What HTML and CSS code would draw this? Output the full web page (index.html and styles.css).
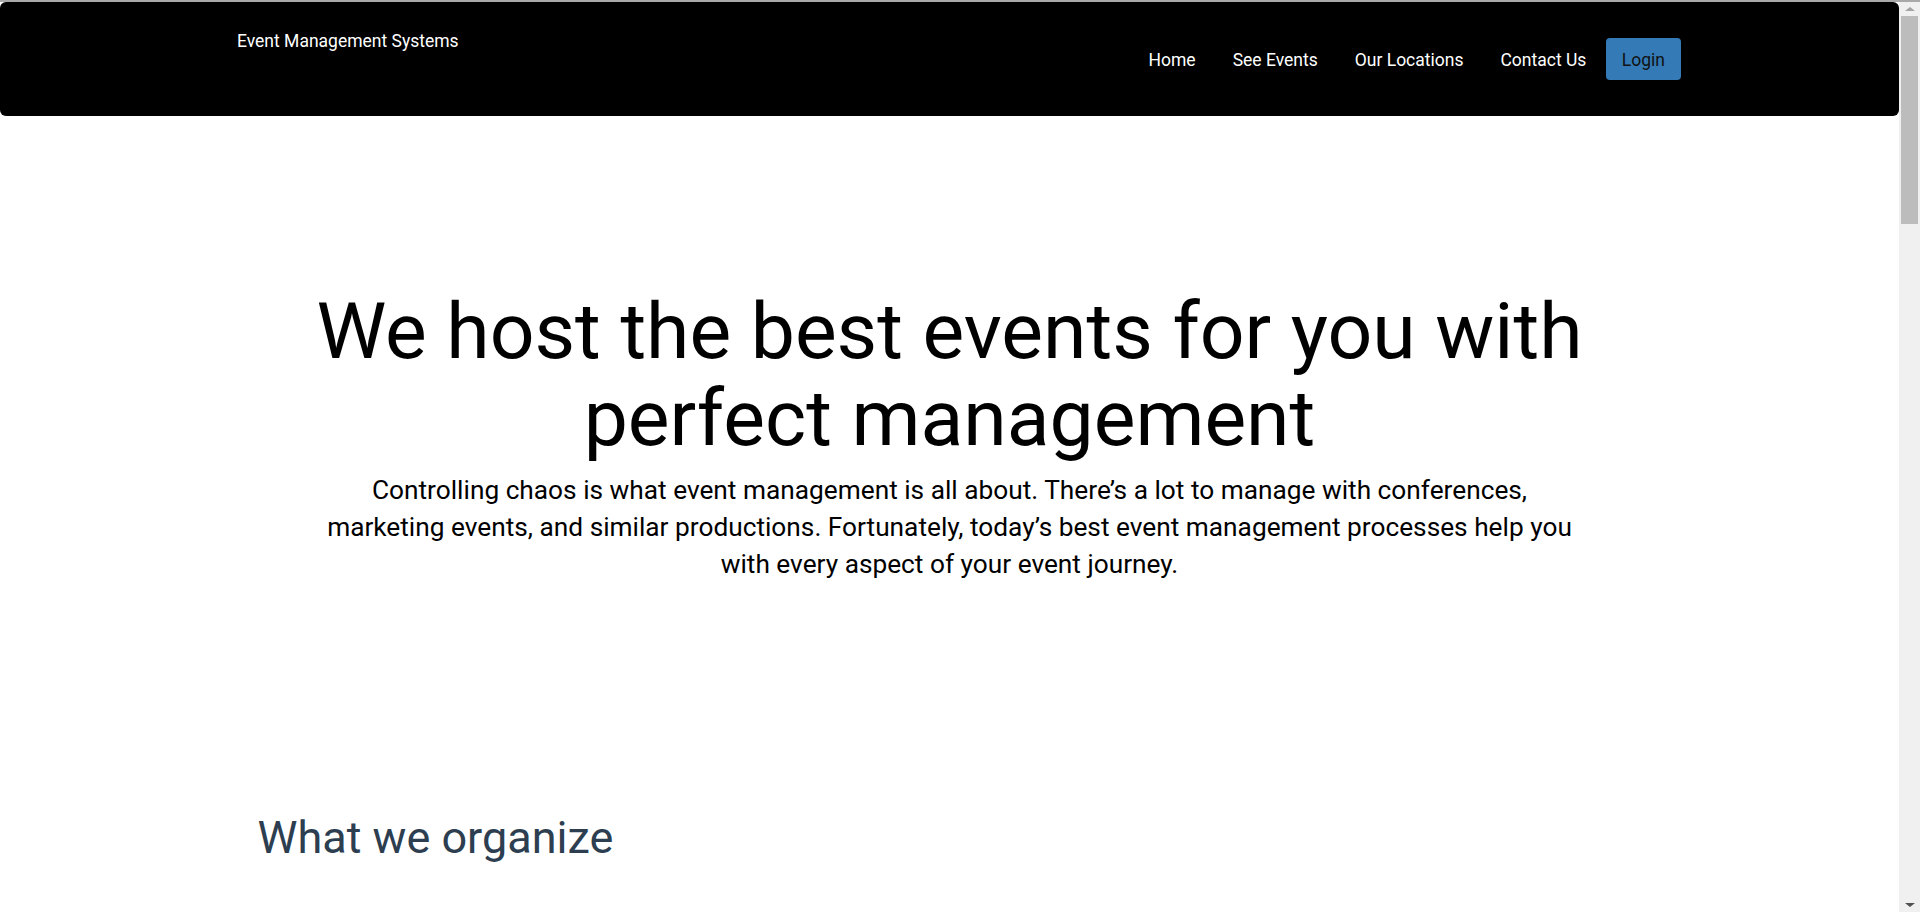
FILE: index.html
```html
<!DOCTYPE html>
<html lang="en">
<head>
<meta charset="utf-8">
<title>Event Management Systems</title>
<link rel="stylesheet" href="styles.css">
</head>
<body>
<header class="navbar">
  <a class="brand" href="#">Event Management Systems</a>
  <nav class="menu">
    <a class="menu-link" href="#">Home</a>
    <a class="menu-link" href="#">See Events</a>
    <a class="menu-link" href="#">Our Locations</a>
    <a class="menu-link" href="#">Contact Us</a>
    <a class="login-btn" href="#">Login</a>
  </nav>
</header>
<main>
  <section class="hero">
    <h1 class="hero-title">We host the best events for you with perfect management</h1>
    <p class="hero-text">Controlling chaos is what event management is all about. There’s a lot to manage with conferences, marketing events, and similar productions. Fortunately, today’s best event management processes help you with every aspect of your event journey.</p>
  </section>
  <section class="organize">
    <h2 class="section-title">What we organize</h2>
    <div class="organize-body"></div>
  </section>
</main>
<div class="scroll-rail" aria-hidden="true">
  <span class="scroll-arrow scroll-arrow-up"></span>
  <span class="scroll-thumb"></span>
  <span class="scroll-arrow scroll-arrow-down"></span>
</div>
</body>
</html>
```

FILE: styles.css
```css
html {
  margin: 0;
  padding: 0;
  background: #f0f0f0;
  border-top: 2px solid #a9a9a9;
}
body {
  margin: 0 21px 0 0;
  padding: 0;
  font-family: Roboto, "Liberation Sans", sans-serif;
  color: #000;
  background: #fff;
}
a { text-decoration: none; }

.navbar {
  box-sizing: border-box;
  height: 114px;
  background: #000;
  border-radius: 6px;
  display: flex;
  justify-content: space-between;
  align-items: flex-start;
  padding: 28.5px 218px 0 237px;
}
.brand {
  color: #fff;
  font-size: 17.5px;
  line-height: 21px;
}
.menu {
  display: flex;
  align-items: center;
  margin-top: 7.5px;
}
.menu-link {
  color: #fff;
  font-size: 17.5px;
  line-height: 21px;
  padding: 2px 18.5px 0;
}
.login-btn {
  box-sizing: border-box;
  height: 42px;
  display: flex;
  align-items: center;
  padding: 1px 16px 0;
  margin-left: 1px;
  background: #337ab7;
  border-radius: 4px;
  color: #111;
  font-size: 17.5px;
}

.hero {
  max-width: 1300px;
  margin: 0 auto;
  padding-top: 172px;
  text-align: center;
}
.hero-title {
  margin: 0;
  font-size: 78.7px;
  font-weight: 400;
  line-height: 1.1;
}
.hero-text {
  max-width: 1262px;
  margin: 11px auto 0;
  font-size: 26.25px;
  line-height: 1.415;
}

.organize {
  max-width: 1384px;
  margin: 227px auto 0;
}
.section-title {
  margin: 0;
  font-size: 45px;
  font-weight: 400;
  line-height: 1.2;
  color: #2c3e50;
}
.organize-body {
  height: 700px;
}

/* visual rail matching the page's scroll bar */
.scroll-rail {
  position: fixed;
  top: 2px;
  right: 0;
  bottom: 0;
  width: 21px;
  background: #f0f0f0;
  display: flex;
  flex-direction: column;
  align-items: center;
}
.scroll-arrow {
  width: 0;
  height: 0;
  border-left: 5px solid transparent;
  border-right: 5px solid transparent;
}
.scroll-arrow-up {
  margin-top: 5px;
  border-bottom: 4px solid #a3a3a3;
}
.scroll-thumb {
  width: 17px;
  height: 208px;
  margin-top: 5px;
  background: #bcbcbc;
  flex: none;
}
.scroll-arrow-down {
  margin-top: auto;
  margin-bottom: 5px;
  border-top: 4px solid #505050;
}
```
